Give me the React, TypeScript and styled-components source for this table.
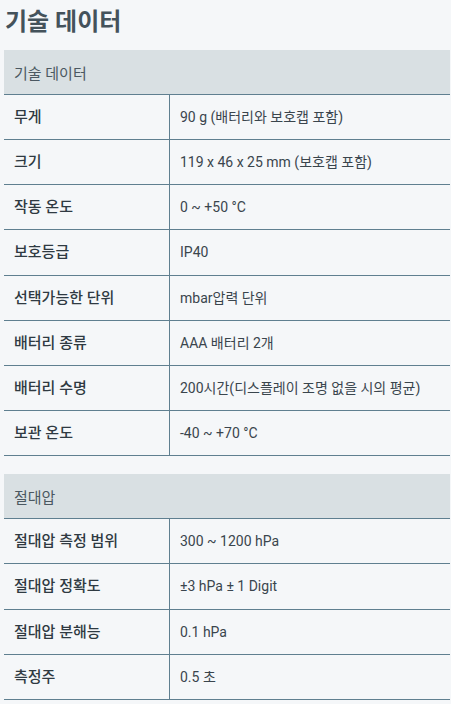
import styled, { createGlobalStyle } from 'styled-components';

const GlobalStyle = createGlobalStyle`
  html, body {
    margin: 0;
    padding: 0;
    background: #f5f7f9;
  }
  body {
    font-family: Roboto, "Noto Sans CJK KR", sans-serif;
    color: #333e46;
  }
`;

const Page = styled.div`
  padding: 6px 1px 0 4px;
`;

const Heading = styled.h2`
  margin: 0 0 12px 1px;
  font-size: 24px;
  line-height: 32px;
  font-weight: 700;
  color: #44525b;
`;

const Table = styled.table`
  width: 100%;
  border-collapse: collapse;
  margin-bottom: 18px;
  font-size: 14px;
`;

const HeadCell = styled.th`
  background: #d9e0e3;
  text-align: left;
  font-size: 15px;
  font-weight: 400;
  color: #4b5861;
  height: 44px;
  padding: 0 10px;
  border-bottom: 1px solid #5f7f90;
`;

const Row = styled.tr`
  border-bottom: 1px solid #5f7f90;
`;

const Label = styled.td`
  width: 145px;
  padding: 12px 10px;
  line-height: 20.16px;
  font-size: 15px;
  font-weight: 500;
  color: #2f3a42;
  border-right: 1px solid #5f7f90;
`;

const Value = styled.td`
  padding: 12px 10px;
  line-height: 20.16px;
  color: #3a454d;
`;

type Spec = [string, string];

const sections: { title: string; rows: Spec[] }[] = [
  {
    title: '기술 데이터',
    rows: [
      ['무게', '90 g (배터리와 보호캡 포함)'],
      ['크기', '119 x 46 x 25 mm (보호캡 포함)'],
      ['작동 온도', '0 ~ +50 °C'],
      ['보호등급', 'IP40'],
      ['선택가능한 단위', 'mbar압력 단위'],
      ['배터리 종류', 'AAA 배터리 2개'],
      ['배터리 수명', '200시간(디스플레이 조명 없을 시의 평균)'],
      ['보관 온도', '-40 ~ +70 °C'],
    ],
  },
  {
    title: '절대압',
    rows: [
      ['절대압 측정 범위', '300 ~ 1200 hPa'],
      ['절대압 정확도', '±3 hPa ± 1 Digit'],
      ['절대압 분해능', '0.1 hPa'],
      ['측정주', '0.5 초'],
    ],
  },
];

export default function App() {
  return (
    <>
      <GlobalStyle />
      <Page>
        <Heading>기술 데이터</Heading>
        {sections.map(section => (
          <Table key={section.title}>
            <thead>
              <tr>
                <HeadCell colSpan={2}>{section.title}</HeadCell>
              </tr>
            </thead>
            <tbody>
              {section.rows.map(([label, value]) => (
                <Row key={label}>
                  <Label>{label}</Label>
                  <Value>{value}</Value>
                </Row>
              ))}
            </tbody>
          </Table>
        ))}
      </Page>
    </>
  );
}
